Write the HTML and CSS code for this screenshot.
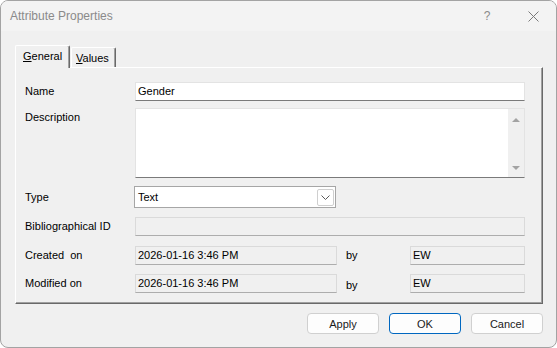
FILE: index.html
```html
<!DOCTYPE html>
<html>
<head>
<meta charset="utf-8">
<link rel="stylesheet" href="styles.css">
</head>
<body>
<div class="window">
  <div class="titlebar">
    <span class="title">Attribute Properties</span>
    <span class="capbtn help">?</span>
    <span class="capbtn close">
      <svg width="11" height="11" viewBox="0 0 11 11"><path d="M0.5 0.5 L10.5 10.5 M10.5 0.5 L0.5 10.5" stroke="#7a7a7a" stroke-width="1" fill="none"/></svg>
    </span>
  </div>
  <div class="content">
    <div class="tabs">
      <div class="tab active"><u>G</u>eneral</div>
      <div class="tab second"><u>V</u>alues</div>
    </div>
    <div class="panel">
      <div class="row r-name">
        <span class="label">Name</span>
        <div class="edit">Gender</div>
      </div>
      <div class="row r-desc">
        <span class="label top">Description</span>
        <div class="memo">
          <div class="vscroll"><span class="arr up"></span><span class="arr down"></span></div>
        </div>
      </div>
      <div class="row r-type">
        <span class="label">Type</span>
        <div class="combo">
          <span class="combo-text">Text</span>
          <span class="ddbtn"><svg width="9" height="5" viewBox="0 0 9 5"><path d="M0.5 0.5 L4.5 4.5 L8.5 0.5" stroke="#5a5a5a" stroke-width="1" fill="none"/></svg></span>
        </div>
      </div>
      <div class="row r-bib">
        <span class="label">Bibliographical ID</span>
        <div class="edit disabled"></div>
      </div>
      <div class="row four r-created">
        <span class="label">Created&nbsp; on</span>
        <div class="edit disabled">2026-01-16 3:46 PM</div>
        <span class="by">by</span>
        <div class="edit disabled">EW</div>
      </div>
      <div class="row four r-modified">
        <span class="label">Modified on</span>
        <div class="edit disabled">2026-01-16 3:46 PM</div>
        <span class="by low">by</span>
        <div class="edit disabled">EW</div>
      </div>
    </div>
    <div class="buttons">
      <button class="btn">Apply</button>
      <button class="btn default">OK</button>
      <button class="btn">Cancel</button>
    </div>
  </div>
</div>
</body>
</html>
```
FILE: styles.css
```css
html, body {
  margin: 0;
  padding: 0;
  background: #ffffff;
}
body {
  font-family: "Liberation Sans", Arial, sans-serif;
  font-size: 11px;
  color: #000;
}
.window {
  width: 557px;
  height: 348px;
  box-sizing: border-box;
  border: 1px solid #a3a3a3;
  border-radius: 8px;
  background: #f0f0f0;
  overflow: hidden;
  display: flex;
  flex-direction: column;
}
.titlebar {
  height: 30px;
  flex: none;
  background: #f3f3f3;
  display: flex;
  align-items: center;
  padding-left: 9px;
}
.title {
  flex: 1;
  font-size: 12px;
  color: #8a8a8a;
}
.capbtn {
  width: 46px;
  height: 30px;
  display: flex;
  align-items: center;
  justify-content: center;
}
.help {
  font-size: 12px;
  color: #8a8a8a;
}
.content {
  padding: 14px 13px 0 14px;
}
.tabs {
  display: flex;
  align-items: flex-end;
  height: 22px;
}
.tab {
  box-sizing: border-box;
  background: #f0f0f0;
  border-top: 1px solid #fff;
  border-left: 1px solid #fff;
  border-right: 1px solid #696969;
  box-shadow: inset -1px 0 0 #a0a0a0;
  border-radius: 2px 2px 0 0;
  line-height: 13px;
  padding-top: 4px;
}
.tab.active {
  width: 55px;
  height: 23px;
  margin-bottom: -1px;
  padding-left: 7px;
  position: relative;
  z-index: 1;
}
.tab.second {
  width: 45px;
  height: 20px;
  margin-left: 1px;
  padding-left: 4px;
}
.tab u {
  text-decoration: underline;
  text-underline-offset: 1px;
}
.panel {
  box-sizing: border-box;
  width: 528px;
  height: 237px;
  border-top: 1px solid #fff;
  border-left: 1px solid #fff;
  border-right: 1px solid #696969;
  border-bottom: 1px solid #696969;
  box-shadow: inset -1px -1px 0 #a0a0a0;
  padding: 14px 17px 0 9px;
}
.row {
  display: grid;
  grid-template-columns: 110px 1fr;
  align-items: center;
}
.row.four {
  grid-template-columns: 110px 202px 73px 115px;
}
.r-desc { margin-top: 7px; }
.r-type { margin-top: 8px; }
.r-bib { margin-top: 9px; }
.r-created { margin-top: 10px; }
.r-modified { margin-top: 9px; }
.label {
  line-height: 13px;
}
.label.top {
  align-self: start;
  padding-top: 3px;
}
.by {
  padding-left: 9px;
  line-height: 13px;
}
.by.low {
  padding-top: 3px;
}
.edit {
  box-sizing: border-box;
  height: 19px;
  background: #fff;
  border: 1px solid #e3e3e3;
  border-bottom-color: #7a7a7a;
  padding-left: 2px;
  line-height: 17px;
  white-space: nowrap;
  overflow: hidden;
}
.edit.disabled {
  background: #f0f0f0;
  border-color: #dadada;
  border-bottom-color: #adadad;
}
.memo {
  box-sizing: border-box;
  height: 70px;
  background: #fff;
  border: 1px solid #e3e3e3;
  border-bottom-color: #7a7a7a;
  display: flex;
  justify-content: flex-end;
}
.vscroll {
  width: 16px;
  background: #f0f0f0;
  display: flex;
  flex-direction: column;
  justify-content: space-between;
  align-items: center;
  padding: 9px 0 7px;
  box-sizing: border-box;
}
.arr {
  width: 0;
  height: 0;
  border-left: 4px solid transparent;
  border-right: 4px solid transparent;
}
.arr.up {
  border-bottom: 4px solid #a3a3a3;
}
.arr.down {
  border-top: 4px solid #a3a3a3;
}
.combo {
  box-sizing: border-box;
  width: 202px;
  height: 22px;
  margin-left: -1px;
  background: #fff;
  border: 1px solid #a6a6a6;
  display: flex;
  align-items: center;
  padding: 0 1px 0 3px;
}
.combo-text {
  flex: 1;
  line-height: 13px;
}
.ddbtn {
  box-sizing: border-box;
  width: 17px;
  height: 17px;
  border: 1px solid #cfcfcf;
  border-radius: 2px;
  display: flex;
  align-items: center;
  justify-content: center;
  padding-top: 1px;
}
.buttons {
  display: flex;
  justify-content: flex-end;
  gap: 10px;
  margin-top: 9px;
}
.btn {
  box-sizing: border-box;
  width: 72px;
  height: 21px;
  border: 1px solid #d0d0d0;
  border-radius: 4px;
  background: #fdfdfd;
  font-family: "Liberation Sans", Arial, sans-serif;
  font-size: 11px;
  color: #1a1a1a;
  padding: 0;
}
.btn.default {
  border-color: #0067c0;
}
```
